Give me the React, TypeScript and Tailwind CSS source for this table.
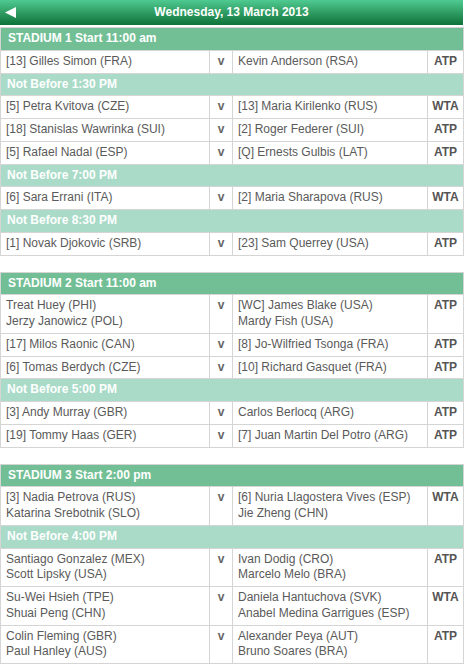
type Match = { a: string[]; b: string[]; tour: 'ATP' | 'WTA' };
type Row = { note: string } | Match;

const stadiums: { title: string; rows: Row[] }[] = [
  {
    title: 'STADIUM 1 Start 11:00 am',
    rows: [
      { a: ['[13] Gilles Simon (FRA)'], b: ['Kevin Anderson (RSA)'], tour: 'ATP' },
      { note: 'Not Before 1:30 PM' },
      { a: ['[5] Petra Kvitova (CZE)'], b: ['[13] Maria Kirilenko (RUS)'], tour: 'WTA' },
      { a: ['[18] Stanislas Wawrinka (SUI)'], b: ['[2] Roger Federer (SUI)'], tour: 'ATP' },
      { a: ['[5] Rafael Nadal (ESP)'], b: ['[Q] Ernests Gulbis (LAT)'], tour: 'ATP' },
      { note: 'Not Before 7:00 PM' },
      { a: ['[6] Sara Errani (ITA)'], b: ['[2] Maria Sharapova (RUS)'], tour: 'WTA' },
      { note: 'Not Before 8:30 PM' },
      { a: ['[1] Novak Djokovic (SRB)'], b: ['[23] Sam Querrey (USA)'], tour: 'ATP' },
    ],
  },
  {
    title: 'STADIUM 2 Start 11:00 am',
    rows: [
      { a: ['Treat Huey (PHI)', 'Jerzy Janowicz (POL)'], b: ['[WC] James Blake (USA)', 'Mardy Fish (USA)'], tour: 'ATP' },
      { a: ['[17] Milos Raonic (CAN)'], b: ['[8] Jo-Wilfried Tsonga (FRA)'], tour: 'ATP' },
      { a: ['[6] Tomas Berdych (CZE)'], b: ['[10] Richard Gasquet (FRA)'], tour: 'ATP' },
      { note: 'Not Before 5:00 PM' },
      { a: ['[3] Andy Murray (GBR)'], b: ['Carlos Berlocq (ARG)'], tour: 'ATP' },
      { a: ['[19] Tommy Haas (GER)'], b: ['[7] Juan Martin Del Potro (ARG)'], tour: 'ATP' },
    ],
  },
  {
    title: 'STADIUM 3 Start 2:00 pm',
    rows: [
      { a: ['[3] Nadia Petrova (RUS)', 'Katarina Srebotnik (SLO)'], b: ['[6] Nuria Llagostera Vives (ESP)', 'Jie Zheng (CHN)'], tour: 'WTA' },
      { note: 'Not Before 4:00 PM' },
      { a: ['Santiago Gonzalez (MEX)', 'Scott Lipsky (USA)'], b: ['Ivan Dodig (CRO)', 'Marcelo Melo (BRA)'], tour: 'ATP' },
      { a: ['Su-Wei Hsieh (TPE)', 'Shuai Peng (CHN)'], b: ['Daniela Hantuchova (SVK)', 'Anabel Medina Garrigues (ESP)'], tour: 'WTA' },
      { a: ['Colin Fleming (GBR)', 'Paul Hanley (AUS)'], b: ['Alexander Peya (AUT)', 'Bruno Soares (BRA)'], tour: 'ATP' },
    ],
  },
];

const cell = 'border border-[#d5d5d5] align-top py-[3px]';

const StadiumTable = ({ title, rows }: { title: string; rows: Row[] }) => (
  <table className="w-[463px] table-fixed border-collapse mb-[16px]">
    <colgroup>
      <col className="w-[209px]" />
      <col className="w-[23px]" />
      <col className="w-[195px]" />
      <col className="w-[36px]" />
    </colgroup>
    <tbody>
      <tr>
        <td colSpan={4} className="border border-[#d5d5d5] bg-[#72bf96] text-white font-bold px-[7px] py-[3px]">
          {title}
        </td>
      </tr>
      {rows.map((row, i) =>
        'note' in row ? (
          <tr key={i}>
            <td colSpan={4} className="border border-[#d5d5d5] bg-[#a9dbc8] text-white font-bold px-[6px] py-[3px]">
              {row.note}
            </td>
          </tr>
        ) : (
          <tr key={i}>
            <td className={`${cell} px-[5px]`}>
              {row.a.map(n => <div key={n}>{n}</div>)}
            </td>
            <td className={`${cell} text-center font-bold text-[#666]`}>v</td>
            <td className={`${cell} px-[5px]`}>
              {row.b.map(n => <div key={n}>{n}</div>)}
            </td>
            <td className={`${cell} text-center font-bold text-[#555]`}>{row.tour}</td>
          </tr>
        )
      )}
    </tbody>
  </table>
);

export default function App() {
  return (
    <div className="w-[463px] bg-white font-['Liberation_Sans',Arial,sans-serif] text-[12px] leading-[15.75px] text-[#5a5a5a]">
      {/* Top bar */}
      <div className="relative h-[25px] bg-gradient-to-b from-[#4fca91] to-[#0a7238] flex items-center justify-center">
        <svg className="absolute left-[5px] top-[7px]" width="11" height="11" viewBox="0 0 11 11">
          <polygon points="11,0 11,11 0,5.5" fill="#fff" />
        </svg>
        <span className="text-white font-bold text-[12px]">Wednesday, 13 March 2013</span>
      </div>
      <div className="pt-[2px]">
        {stadiums.map(s => (
          <StadiumTable key={s.title} title={s.title} rows={s.rows} />
        ))}
      </div>
    </div>
  );
}
